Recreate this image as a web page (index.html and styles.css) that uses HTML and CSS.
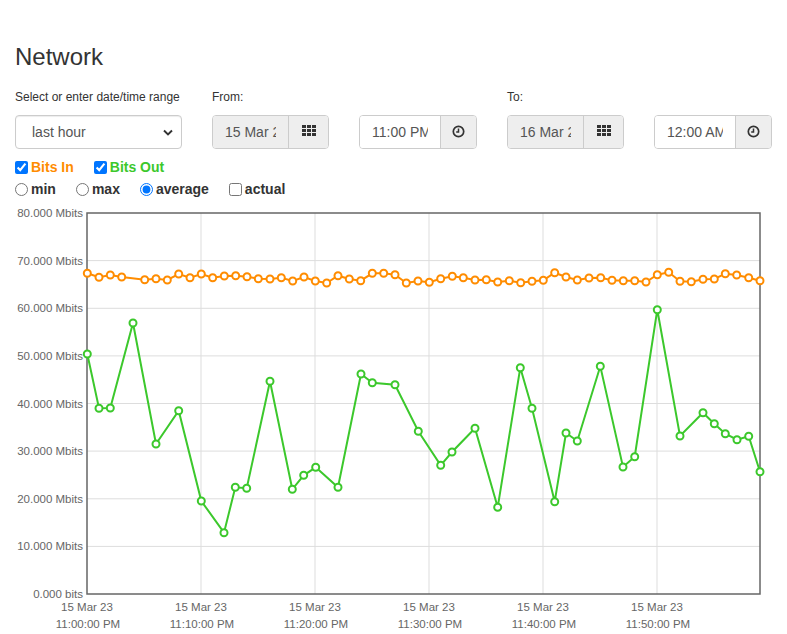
FILE: index.html
```html
<!DOCTYPE html>
<html>
<head>
<meta charset="utf-8">
<title>Network</title>
<link rel="stylesheet" href="styles.css">
</head>
<body>
<div class="page">
  <h1 class="title">Network</h1>
  <div class="controls">
    <div class="group group-range">
      <label class="lbl">Select or enter date/time range</label>
      <div class="select-wrap">
        <select class="select"><option>last hour</option></select>
        <svg class="chevron" width="10" height="7" viewBox="0 0 10 7"><path d="M1 1.5 L5 5.5 L9 1.5" fill="none" stroke="#333" stroke-width="1.9"/></svg>
      </div>
    </div>
    <div class="group group-from">
      <label class="lbl">From:</label>
      <div class="pair">
        <div class="igroup date">
          <input class="inp inp-ro" value="15 Mar 23" readonly>
          <span class="addon addon-cal"><svg width="14" height="11" viewBox="0 0 14 11"><g fill="#333"><rect x="0" y="0" width="4" height="3"/><rect x="5" y="0" width="4" height="3"/><rect x="10" y="0" width="4" height="3"/><rect x="0" y="4" width="4" height="3"/><rect x="5" y="4" width="4" height="3"/><rect x="10" y="4" width="4" height="3"/><rect x="0" y="8" width="4" height="3"/><rect x="5" y="8" width="4" height="3"/><rect x="10" y="8" width="4" height="3"/></g></svg></span>
        </div>
        <div class="igroup time">
          <input class="inp" value="11:00 PM">
          <span class="addon addon-clock"><svg width="13" height="13" viewBox="0 0 13 13"><circle cx="6.5" cy="6.5" r="5.2" fill="none" stroke="#333" stroke-width="1.7"/><path d="M6.5 3.4 V7 H4.2" fill="none" stroke="#333" stroke-width="1.5"/></svg></span>
        </div>
      </div>
    </div>
    <div class="group group-to">
      <label class="lbl">To:</label>
      <div class="pair">
        <div class="igroup date">
          <input class="inp inp-ro" value="16 Mar 23" readonly>
          <span class="addon addon-cal"><svg width="14" height="11" viewBox="0 0 14 11"><g fill="#333"><rect x="0" y="0" width="4" height="3"/><rect x="5" y="0" width="4" height="3"/><rect x="10" y="0" width="4" height="3"/><rect x="0" y="4" width="4" height="3"/><rect x="5" y="4" width="4" height="3"/><rect x="10" y="4" width="4" height="3"/><rect x="0" y="8" width="4" height="3"/><rect x="5" y="8" width="4" height="3"/><rect x="10" y="8" width="4" height="3"/></g></svg></span>
        </div>
        <div class="igroup time">
          <input class="inp" value="12:00 AM">
          <span class="addon addon-clock"><svg width="13" height="13" viewBox="0 0 13 13"><circle cx="6.5" cy="6.5" r="5.2" fill="none" stroke="#333" stroke-width="1.7"/><path d="M6.5 3.4 V7 H4.2" fill="none" stroke="#333" stroke-width="1.5"/></svg></span>
        </div>
      </div>
    </div>
  </div>
  <div class="opts">
    <label class="opt"><input type="checkbox" checked><span class="in">Bits In</span></label>
    <label class="opt"><input type="checkbox" checked><span class="out">Bits Out</span></label>
  </div>
  <div class="opts">
    <label class="opt"><input type="radio" name="m"><span>min</span></label>
    <label class="opt"><input type="radio" name="m"><span>max</span></label>
    <label class="opt"><input type="radio" name="m" checked><span>average</span></label>
    <label class="opt"><input type="checkbox"><span>actual</span></label>
  </div>
</div>
<svg class="chart" width="787" height="434" viewBox="0 200 787 434">
  <defs>
    <marker id="mo" markerWidth="12" markerHeight="12" refX="6" refY="6" markerUnits="userSpaceOnUse"><circle cx="6" cy="6" r="3.5" fill="#fff" stroke="#ff8c00" stroke-width="2"/></marker>
    <marker id="mg" markerWidth="12" markerHeight="12" refX="6" refY="6" markerUnits="userSpaceOnUse"><circle cx="6" cy="6" r="3.5" fill="#fff" stroke="#3cc82c" stroke-width="2"/></marker>
  </defs>
  <g stroke="#ddd" stroke-width="1">
    <line x1="87" y1="260.6" x2="760" y2="260.6"/>
    <line x1="87" y1="308.3" x2="760" y2="308.3"/>
    <line x1="87" y1="355.9" x2="760" y2="355.9"/>
    <line x1="87" y1="403.5" x2="760" y2="403.5"/>
    <line x1="87" y1="451.1" x2="760" y2="451.1"/>
    <line x1="87" y1="498.8" x2="760" y2="498.8"/>
    <line x1="87" y1="546.4" x2="760" y2="546.4"/>
    <line x1="201" y1="213" x2="201" y2="594"/>
    <line x1="315" y1="213" x2="315" y2="594"/>
    <line x1="429" y1="213" x2="429" y2="594"/>
    <line x1="543" y1="213" x2="543" y2="594"/>
    <line x1="657" y1="213" x2="657" y2="594"/>
  </g>
  <rect x="87" y="213" width="673" height="381" fill="none" stroke="#666" stroke-width="1.5"/>
  <g class="ylab" text-anchor="end">
    <text x="83" y="217">80.000 Mbits</text>
    <text x="83" y="264.6">70.000 Mbits</text>
    <text x="83" y="312.3">60.000 Mbits</text>
    <text x="83" y="359.9">50.000 Mbits</text>
    <text x="83" y="407.5">40.000 Mbits</text>
    <text x="83" y="455.1">30.000 Mbits</text>
    <text x="83" y="502.8">20.000 Mbits</text>
    <text x="83" y="550.4">10.000 Mbits</text>
    <text x="83" y="598">0.000 bits</text>
  </g>
  <g class="xlab" text-anchor="middle">
    <text x="87" y="611">15 Mar 23</text><text x="88" y="628">11:00:00 PM</text>
    <text x="201" y="611">15 Mar 23</text><text x="202" y="628">11:10:00 PM</text>
    <text x="315" y="611">15 Mar 23</text><text x="316" y="628">11:20:00 PM</text>
    <text x="429" y="611">15 Mar 23</text><text x="430" y="628">11:30:00 PM</text>
    <text x="543" y="611">15 Mar 23</text><text x="544" y="628">11:40:00 PM</text>
    <text x="657" y="611">15 Mar 23</text><text x="658" y="628">11:50:00 PM</text>
  </g>
  <polyline fill="none" stroke="#ff8c00" stroke-width="2" marker-start="url(#mo)" marker-mid="url(#mo)" marker-end="url(#mo)"
    points="87.3,273.3 99,277.3 110.3,275 121.7,277 144.7,279.7 156,278.7 167.3,280 178.7,274 190,277.7 201.3,274 212.7,277.7 224.3,276 235.7,275.7 247,276.7 258.3,278.7 270,279 281.3,277.7 292.7,281 304,277 315.3,281 326.7,283 338,275.7 349.3,279 360.7,280.7 372.3,273.3 383.7,273.3 395,274.7 406.3,283 418,281 429.3,282.3 440.7,278.7 452.3,276.3 463.3,277.7 475,280 486.3,279.7 497.7,282 509.3,280.7 520.7,282.7 532,281.3 543.3,280.3 554.7,272.7 566,277 577.3,280 589,278 600.7,277.7 612,280.3 623.3,280.7 634.7,280.7 646,282 657.3,274.7 668.7,272.3 680,281.3 691.3,281.7 703,279.3 714.3,279 725.3,273.7 736.7,275 748.7,277.7 760,280.7"/>
  <polyline fill="none" stroke="#3cc82c" stroke-width="2" marker-start="url(#mg)" marker-mid="url(#mg)" marker-end="url(#mg)"
    points="87.3,354 99,408.3 110.3,408 133,323 156,444 178.7,410.7 201.3,501 224,532.7 235.3,487.3 246.7,488.3 270,381.3 292.3,489.3 303.7,475.3 315.7,467.3 338,487.3 361,374 372.3,382.7 395,384.7 418.3,431.3 440.7,465.3 452,452 475,428.3 497.7,507.3 520.3,367.7 532,408.3 554.7,501.7 566,433 577.3,441 600.3,366.3 623,467 634.7,456.7 657.3,309.7 680,436 703,412.7 714.3,423.7 725.3,433.7 737,439.7 748.7,436.3 760,471.7"/>
</svg>
</body>
</html>
```
FILE: styles.css
```css
* { box-sizing: border-box; }
body {
  margin: 0;
  font-family: "Liberation Sans", Arial, sans-serif;
  color: #333;
  background: #fff;
}
.page {
  padding: 0 15px;
}
.title {
  margin: 44px 0 0;
  font-size: 24px;
  line-height: 26px;
  font-weight: normal;
  color: #333;
}
.controls {
  display: flex;
  margin-top: 19px;
}
.group {
  display: flex;
  flex-direction: column;
}
.group-range { width: 197px; }
.group-from { width: 295px; }
.lbl {
  display: block;
  font-size: 12px;
  line-height: 17px;
  margin-bottom: 9px;
  color: #333;
}
.select-wrap {
  position: relative;
  width: 167px;
  height: 34px;
}
.select {
  appearance: none;
  -webkit-appearance: none;
  width: 167px;
  height: 34px;
  border: 1px solid #ccc;
  border-radius: 4px;
  background: #fff;
  font-family: "Liberation Sans", Arial, sans-serif;
  font-size: 14px;
  color: #555;
  padding: 0 12px 0 16px;
  box-shadow: inset 0 1px 1px rgba(0,0,0,0.075);
}
.chevron {
  position: absolute;
  right: 9px;
  top: 14px;
}
.pair {
  display: flex;
  gap: 30px;
}
.igroup {
  display: flex;
  height: 34px;
  border: 1px solid #ccc;
  border-radius: 4px;
  overflow: hidden;
}
.igroup.date { width: 117px; }
.igroup.time { width: 118px; }
.inp {
  border: 0;
  margin: 0;
  height: 32px;
  padding: 0 12px;
  font-family: "Liberation Sans", Arial, sans-serif;
  font-size: 14px;
  color: #555;
  background: #fff;
  min-width: 0;
  outline: none;
}
.date .inp { width: 75px; padding-left: 12px; }
.time .inp { width: 80px; padding-left: 12px; }
.inp-ro { background: #eee; }
.addon {
  flex: 1;
  display: flex;
  align-items: center;
  justify-content: center;
  background: #eee;
  border-left: 1px solid #ccc;
}
.addon-cal svg { margin-top: -3px; }
.addon-clock svg { margin-top: -2px; }
.opts {
  display: flex;
  gap: 20px;
  height: 22px;
  align-items: center;
}
.controls + .opts { margin-top: 7px; }
.opt {
  display: flex;
  align-items: center;
  font-size: 14px;
  font-weight: bold;
  color: #333;
}
.opt input {
  margin: 0 3px 0 0;
  width: 13px;
  height: 13px;
}
.in { color: #ff8c00; }
.out { color: #3cc82c; }
.chart {
  display: block;
}
.ylab text, .xlab text {
  font-family: "Liberation Sans", Arial, sans-serif;
  font-size: 11.5px;
  fill: #666;
}
```
